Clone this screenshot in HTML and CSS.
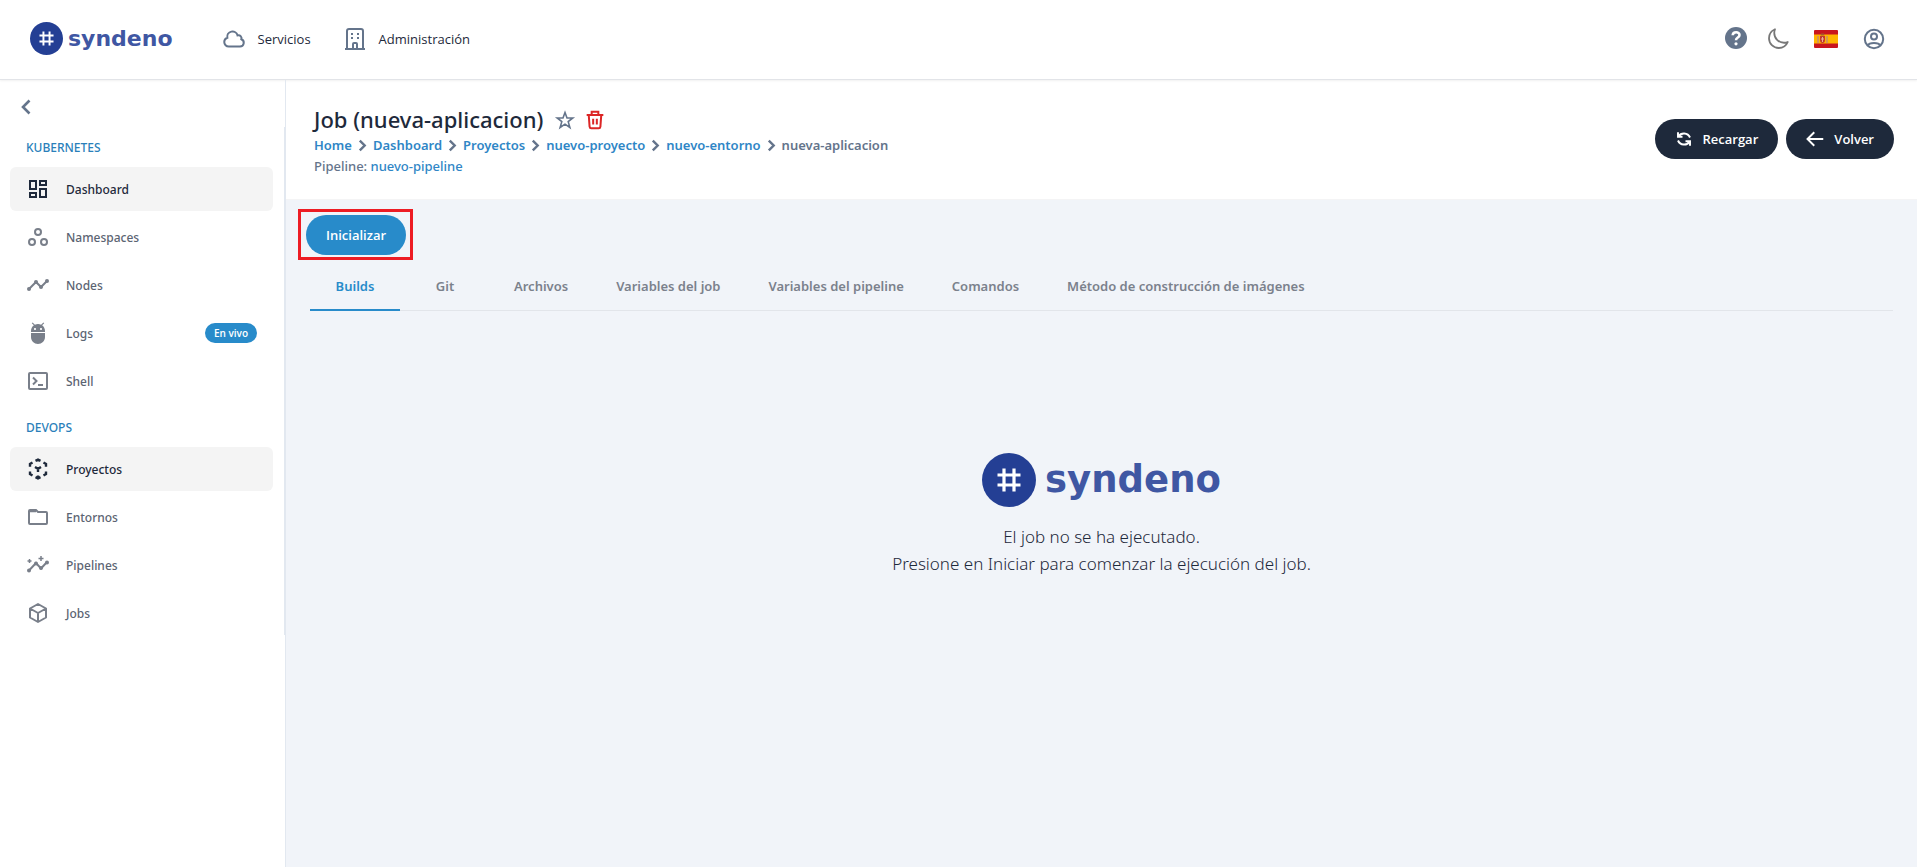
FILE: index.html
```html
<!DOCTYPE html>
<html lang="es">
<head>
<meta charset="utf-8">
<title>Job (nueva-aplicacion) - syndeno</title>
<link rel="stylesheet" href="styles.css">
</head>
<body>
<svg class="sprite" aria-hidden="true">
  <symbol id="mark" viewBox="0 0 54 54"><circle cx="27" cy="27" r="27" fill="#243f94"/><path d="M22 15.500v23M32 15.500v23M15.500 22h23M15.500 32h23" stroke="#fff" stroke-width="3.200" fill="none"/></symbol>
  <symbol id="chevron" viewBox="0 0 24 24"><path d="M7 3l9 9-9 9" fill="none" stroke="currentColor" stroke-width="4.500"/></symbol>
</svg>
<header class="topbar">
  <a class="brand" href="#"><svg class="brand-mark"><use href="#mark"/></svg><span class="brand-name">syndeno</span></a>
  <nav class="topnav">
    <a href="#"><svg viewBox="0 0 24 24"><path d="M2.250 15a4.500 4.500 0 004.500 4.500H18a3.750 3.750 0 001.332-7.257 3 3 0 00-3.758-3.848 5.250 5.250 0 00-10.233 2.330A4.502 4.502 0 002.250 15z" fill="none" stroke="currentColor" stroke-width="2"/></svg>Servicios</a>
    <a href="#"><svg viewBox="0 0 24 24"><path d="M2 22h20M4 22V4q0-2 2-2h12q2 0 2 2v18M10 22v-5q0-1 1-1h2q1 0 1 1v5M8 7h2M14 7h2M8 11h2M14 11h2" fill="none" stroke="currentColor" stroke-width="2"/></svg>Administración</a>
  </nav>
  <div class="tools">
    <button aria-label="Ayuda"><svg class="help" viewBox="0 0 24 24"><circle cx="12" cy="11" r="11" fill="currentColor"/><path d="M8.700 8.300c.2-4 6.800-4 6.800-.3 0 2.700-3.500 2.300-3.500 5.200" fill="none" stroke="#fff" stroke-width="2.600"/><circle cx="12" cy="16.800" r="1.600" fill="#fff"/></svg></button>
    <button aria-label="Modo oscuro"><svg class="moon" viewBox="0 0 24 24"><path d="M21.752 15.002A9.718 9.718 0 0118 15.750c-5.385 0-9.750-4.365-9.750-9.750 0-1.330.266-2.597.748-3.752A9.753 9.753 0 003 11.250C3 16.635 7.365 21 12.750 21a9.753 9.753 0 009.002-5.998z" fill="none" stroke="currentColor" stroke-width="1.800" stroke-linejoin="round"/></svg></button>
    <button aria-label="Español"><svg class="flag" viewBox="0 0 24 18"><rect width="24" height="18" rx="1" fill="#c9151e"/><path d="M0 4.500h24v9H0z" fill="#ffb400"/><path d="M6 6h5v4q0 3-2.500 3T6 10z" fill="#c4382b"/><path d="M4 6v7M13 6v7" stroke="#c58a72" stroke-width="1.500"/><path d="M6.500 5.500l.5-2h3l.5 2z" fill="#a8572b"/><path d="M7 9h3M8.500 7v5" stroke="#e8b09a"/></svg></button>
    <button aria-label="Cuenta"><svg class="user" viewBox="0 0 24 24"><g fill="none" stroke="currentColor" stroke-width="2"><circle cx="12" cy="12" r="9.200"/><circle cx="12" cy="9.500" r="3"/><path d="M5.500 18.500c2-3.500 11-3.500 13 0"/></g></svg></button>
  </div>
</header>
<div class="shell">
  <aside class="sidebar">
    <button class="collapse" aria-label="Contraer"><svg viewBox="0 0 24 24"><path d="M15.500 5.500L9 12l6.500 6.500" fill="none" stroke="currentColor" stroke-width="2.600"/></svg></button>
    <nav class="menu">
      <h2>KUBERNETES</h2>
      <a class="on" href="#"><svg viewBox="0 0 24 24"><path d="M4 4h6v8H4zM14 4h6v4h-6zM14 12h6v8h-6zM4 16h6v4H4z" fill="none" stroke="currentColor" stroke-width="2"/></svg>Dashboard</a>
      <a href="#"><svg viewBox="0 0 24 24"><g fill="none" stroke="currentColor" stroke-width="2"><circle cx="12" cy="7" r="3"/><circle cx="6" cy="17" r="3"/><circle cx="18" cy="17" r="3"/></g></svg>Namespaces</a>
      <a href="#"><svg viewBox="0 0 24 24"><path d="M3 16l7-7 5 5 6-6" fill="none" stroke="currentColor" stroke-width="2"/><g fill="currentColor"><circle cx="3" cy="16" r="2"/><circle cx="10" cy="9" r="2"/><circle cx="15" cy="14" r="2"/><circle cx="21" cy="8" r="2"/></g></svg>Nodes</a>
      <a href="#"><svg viewBox="0 0 24 24"><path d="M5 16c0 3.870 3.130 7 7 7s7-3.130 7-7v-4H5v4zM16.120 4.370l2.100-2.100-.820-.830-2.300 2.310C14.160 3.280 13.120 3 12 3s-2.160.280-3.090.750L6.600 1.440l-.820.830 2.100 2.100C6.140 5.640 5 7.680 5 10v1h14v-1c0-2.320-1.140-4.360-2.880-5.630zM9 9c-.550 0-1-.450-1-1s.450-1 1-1 1 .450 1 1-.450 1-1 1zm6 0c-.550 0-1-.450-1-1s.450-1 1-1 1 .450 1 1-.450 1-1 1z" fill="currentColor"/></svg>Logs<span class="badge">En vivo</span></a>
      <a href="#"><svg viewBox="0 0 24 24"><rect x="3" y="4" width="18" height="16" rx="1" fill="none" stroke="currentColor" stroke-width="2"/><path d="M7 8.500l3.500 3.500L7 15.500M12 16h5" fill="none" stroke="currentColor" stroke-width="2"/></svg>Shell</a>
      <h2>DEVOPS</h2>
      <a class="on" href="#"><svg viewBox="0 0 24 24"><path d="M9.500 3.900L12 2.700l2.500 1.200M17.500 5.500L20 7v2.800M20 14.500V17l-2.500 1.500M14.500 20.200L12 21.400l-2.500-1.200M12 18.500v3M6.500 18.500L4 17v-2.500M4 9.800V7l2.500-1.500M9 10l3 1.800 3-1.800M12 11.500V15" fill="none" stroke="currentColor" stroke-width="2.400"/></svg>Proyectos</a>
      <a href="#"><svg viewBox="0 0 24 24"><path d="M3 6v12q0 1 1 1h16q1 0 1-1V8q0-1-1-1h-8l-2-2H4Q3 5 3 6zM4 6.200h6" fill="none" stroke="currentColor" stroke-width="2"/></svg>Entornos</a>
      <a href="#"><svg viewBox="0 0 24 24"><path d="M3 17.500l7-7.500 5 5.500 6-6.500" fill="none" stroke="currentColor" stroke-width="2"/><path d="M3.500 6v4M1.500 8h4M15 3v5M12.500 5.500h5" fill="none" stroke="currentColor" stroke-width="1.500"/><g fill="currentColor"><circle cx="3" cy="17.500" r="2"/><circle cx="10" cy="10.500" r="2"/><circle cx="15" cy="15" r="2"/><circle cx="21" cy="9.500" r="2"/></g></svg>Pipelines</a>
      <a href="#"><svg viewBox="0 0 24 24"><path d="M12 3l8 4.500v9L12 21l-8-4.500v-9zM4 7.500l8 4.500 8-4.500M12 12v9" fill="none" stroke="currentColor" stroke-width="2" stroke-linejoin="round"/></svg>Jobs</a>
    </nav>
  </aside>
  <main class="main">
    <section class="pagehead">
      <div class="headings">
        <div class="title"><h1>Job (nueva-aplicacion)</h1>
          <button aria-label="Favorito"><svg class="star" viewBox="0 0 24 24"><path d="M12 4.500l2 5.500h5.800l-4.600 3.600 1.700 5.900-4.900-3.400-4.900 3.400 1.700-5.900L4.200 10H10z" fill="none" stroke="currentColor" stroke-width="1.600"/></svg></button>
          <button aria-label="Eliminar"><svg class="trash" viewBox="0 0 24 24"><path d="M2 6h20M4.500 6l1 14q.2 2 2 2h9q1.800 0 2-2l1-14M8 6V2.200h8V6M9.800 10.500v7M14.200 10.500v7" fill="none" stroke="currentColor" stroke-width="2.400"/></svg></button>
        </div>
        <nav class="crumbs"><a href="#">Home</a><svg><use href="#chevron"/></svg><a href="#">Dashboard</a><svg><use href="#chevron"/></svg><a href="#">Proyectos</a><svg><use href="#chevron"/></svg><a href="#">nuevo-proyecto</a><svg><use href="#chevron"/></svg><a href="#">nuevo-entorno</a><svg><use href="#chevron"/></svg><span>nueva-aplicacion</span></nav>
        <p class="pipe">Pipeline: <a href="#">nuevo-pipeline</a></p>
      </div>
      <div class="actions">
        <button class="pill dark"><svg viewBox="0 0 24 24"><path d="M4 3v6h6M4.500 8.500C8 3 17 3 20 10M20 21v-6h-6M19.500 15.500C16 21 7 21 4 14" fill="none" stroke="currentColor" stroke-width="2.600"/></svg>Recargar</button>
        <button class="pill dark"><svg viewBox="0 0 24 24"><path d="M23 12H3M11 3l-9 9 9 9" fill="none" stroke="currentColor" stroke-width="2.600"/></svg>Volver</button>
      </div>
    </section>
    <section class="content">
      <div class="callout"><button class="pill blue">Inicializar</button></div>
      <div class="tabs" role="tablist">
        <button class="active" role="tab" aria-selected="true">Builds</button><button role="tab">Git</button><button role="tab">Archivos</button><button role="tab">Variables del job</button><button role="tab">Variables del pipeline</button><button role="tab">Comandos</button><button role="tab">Método de construcción de imágenes</button>
      </div>
      <div class="empty">
        <div class="brand large"><svg class="brand-mark"><use href="#mark"/></svg><span class="brand-name">syndeno</span></div>
        <p>El job no se ha ejecutado.<br>Presione en Iniciar para comenzar la ejecución del job.</p>
      </div>
    </section>
  </main>
</div>
</body>
</html>
```
FILE: styles.css
```css
* { box-sizing: border-box; }
body {
  margin: 0;
  min-height: 100vh;
  display: flex;
  flex-direction: column;
  font-family: "Noto Sans", "Open Sans", sans-serif;
  font-size: 12px;
  font-weight: 500;
  color: #1e293b;
  background: #fff;
}
button { font: inherit; color: inherit; border: 0; padding: 0; background: none; cursor: pointer; }
a { color: inherit; text-decoration: none; }
h1, h2, p { margin: 0; }
svg { display: block; flex: none; }
.sprite { position: absolute; width: 0; height: 0; }

.topbar {
  display: flex;
  align-items: center;
  height: 80px;
  padding: 0 31px 2px 30px;
  border-bottom: 1px solid #e2e4e8;
  box-shadow: 0 1px 2px rgba(0, 0, 0, .06);
}
.brand { display: flex; align-items: center; gap: 5px; color: #3f57a3; }
.brand-mark { width: 33px; height: 33px; }
.brand-name { font: bold 22px/26px "DejaVu Sans", sans-serif; }
.brand.large { gap: 9px; }
.large .brand-mark { width: 54px; height: 54px; }
.large .brand-name { font-size: 37px; line-height: 42px; }
.topnav { display: flex; gap: 32px; margin-left: 49px; font: 400 13px/20px "Open Sans", sans-serif; }
.topnav a { display: flex; align-items: center; gap: 12px; }
.topnav svg { width: 24px; height: 24px; color: #64748b; }
.tools { display: flex; align-items: center; gap: 18px; margin-left: auto; color: #64748b; }
.tools button { display: grid; place-items: center; }
.help, .moon, .user, .flag { width: 24px; height: 24px; }
.moon { color: #777; }
.tools button:nth-child(3) { margin: 0 6px; }

.shell { display: flex; flex: 1; }
.sidebar { flex: 0 0 286px; border-right: 1px solid #e2e8f0; }
.collapse { display: block; margin: 15px 0 8px 14px; color: #64748b; }
.collapse svg { width: 24px; height: 24px; }
.menu { padding: 0 11px 0 10px; border-right: 1px solid #e2e8f0; color: #5b6472; }
.menu h2 { padding: 12px 16px 10px; font-size: 12px; line-height: 18px; font-weight: 500; color: #2a7fba; }
.menu a { display: flex; align-items: center; gap: 16px; height: 44px; margin-bottom: 4px; padding: 0 16px; border-radius: 6px; }
.menu a svg { width: 24px; height: 24px; color: #797f8a; }
.menu .on, .menu .on svg { color: #1e293b; }
.menu .on { background: #f4f4f4; }
.badge { margin-left: auto; padding: 0 9px; border-radius: 10px; background: #288bca; color: #fff; font: 600 10px/20px "Open Sans", sans-serif; }

.main { flex: 1; min-width: 0; display: flex; flex-direction: column; }
.pagehead { display: flex; justify-content: space-between; align-items: center; padding: 24px 23px 22px 28px; border-bottom: 1px solid #f4f4f5; }
.title { display: flex; align-items: center; gap: 8px; height: 31px; }
h1 { font-size: 22px; line-height: 31px; font-weight: 500; margin-right: 2px; }
.star { width: 24px; height: 24px; color: #64748b; }
.trash { width: 20px; height: 20px; color: #dc2626; }
.crumbs { display: flex; align-items: center; gap: 4px; font-size: 13px; line-height: 20px; font-weight: 600; color: #64748b; }
.crumbs svg { width: 13px; height: 13px; }
.crumbs a, .pipe a { color: #2f86c6; }
.pipe { font-size: 13px; line-height: 22px; color: #64748b; }
.actions { display: flex; gap: 8px; margin-bottom: 4px; }
.pill { display: flex; align-items: center; gap: 10px; height: 40px; padding: 0 20px; border-radius: 20px; color: #fff; font: 600 13px/20px "Open Sans", sans-serif; }
.dark { background: #1e293b; }
.dark svg { width: 18px; height: 18px; }
.blue { background: #288bca; }
.content { flex: 1; padding: 9px 24px 24px 12px; background: #f1f4f9; }
.callout { width: max-content; padding: 3px 4px 2px 5px; border: 3px solid #ed1c24; }
.tabs { display: flex; margin: 2px 0 0 12px; border-bottom: 1px solid #e2e5ea; }
.tabs button { min-width: 90px; height: 49px; padding: 0 24px; font-size: 13px; font-weight: 600; color: #7b818c; border-bottom: 2px solid transparent; margin-bottom: -1px; }
.tabs .active { color: #288bca; border-color: #288bca; }
.empty { display: flex; flex-direction: column; align-items: center; padding-top: 142px; padding-left: 12px; text-align: center; gap: 16px; }
.empty p { font-size: 17px; line-height: 27px; font-weight: 350; }
```
